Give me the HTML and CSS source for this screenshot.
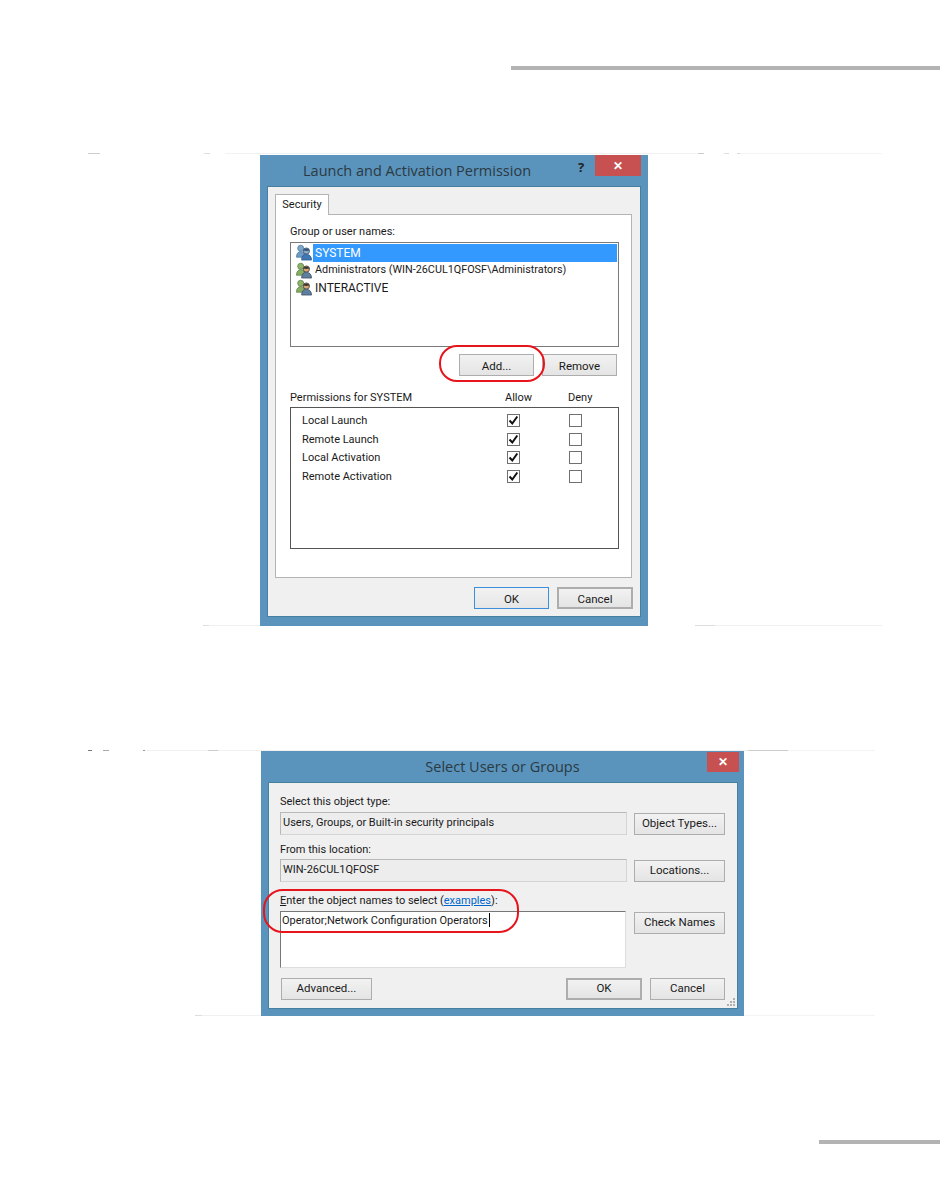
FILE: index.html
```html
<!DOCTYPE html>
<html lang="en">
<head>
    <meta charset="UTF-8">
    <meta name="viewport" content="width=device-width, initial-scale=1.0">
    <title>Launch and Activation Permission</title>
    <link rel="stylesheet" href="styles.css">
</head>
<body>
<svg class="defs" width="0" height="0">
    <symbol id="users" viewBox="0 0 18 18">
        <circle cx="5.500" cy="4.500" r="3.200" fill="#8fb36a" stroke="#5d7f48" stroke-width=".8"/>
        <path d="M1 14c0-4 2-6 4.500-6S10 10 10 14z" fill="#86ad62" stroke="#5d7f48" stroke-width=".8"/>
        <circle cx="11.500" cy="7.500" r="3.300" fill="#d8a878" stroke="#4d4a45" stroke-width="1"/>
        <path d="M8.200 7c.5-3 6-3.200 6.600 0-2 .6-4.600.6-6.600 0z" fill="#3d3a36"/>
        <path d="M6.500 17c0-4 2-6.200 5-6.200s5.500 2.200 5.500 6.200z" fill="#5f7f9e" stroke="#3c4f63" stroke-width=".8"/>
    </symbol>
    <symbol id="users-sel" viewBox="0 0 18 18">
        <circle cx="5.500" cy="4.500" r="3.200" fill="#7fa6c8" stroke="#4c7aa3" stroke-width=".8"/>
        <path d="M1 14c0-4 2-6 4.500-6S10 10 10 14z" fill="#6d9bc4" stroke="#4c7aa3" stroke-width=".8"/>
        <circle cx="11.500" cy="7.500" r="3.300" fill="#8fa9c4" stroke="#3f5f82" stroke-width="1"/>
        <path d="M8.200 7c.5-3 6-3.200 6.600 0-2 .6-4.600.6-6.600 0z" fill="#35557a"/>
        <path d="M6.500 17c0-4 2-6.200 5-6.200s5.500 2.200 5.500 6.200z" fill="#3f78b5" stroke="#2f5784" stroke-width=".8"/>
    </symbol>
    <symbol id="check" viewBox="0 0 13 13">
        <path d="M2.500 6.500l2.800 3 5-7" fill="none" stroke="#111" stroke-width="2"/>
    </symbol>
</svg>

<div class="page">
    <div class="top-rule"></div>

    <div class="scan-line scan-a"></div>

    <section class="dialog perm-dialog">
        <div class="titlebar">
            <div class="title perm-title">Launch and Activation Permission</div>
            <div class="help">?</div>
            <div class="close perm-close">&#10005;</div>
        </div>
        <div class="client perm-client">
            <div class="tab">Security</div>
            <div class="tab-panel">
                <div class="label names-label">Group or user names:</div>
                <div class="listbox">
                    <div class="user-row">
                        <svg class="user-icon"><use href="#users-sel"/></svg>
                        <span class="user-name selected">SYSTEM</span>
                    </div>
                    <div class="user-row">
                        <svg class="user-icon"><use href="#users"/></svg>
                        <span class="user-name small">Administrators (WIN-26CUL1QFOSF\Administrators)</span>
                    </div>
                    <div class="user-row">
                        <svg class="user-icon"><use href="#users"/></svg>
                        <span class="user-name">INTERACTIVE</span>
                    </div>
                </div>
                <div class="list-actions">
                    <button class="btn btn-add">Add...</button>
                    <button class="btn btn-remove">Remove</button>
                </div>
                <div class="perm-head">
                    <span>Permissions for SYSTEM</span>
                    <span>Allow</span>
                    <span>Deny</span>
                </div>
                <div class="perm-box">
                    <div class="perm-row">
                        <span>Local Launch</span>
                        <span class="check"><svg><use href="#check"/></svg></span>
                        <span class="check"></span>
                    </div>
                    <div class="perm-row">
                        <span>Remote Launch</span>
                        <span class="check"><svg><use href="#check"/></svg></span>
                        <span class="check"></span>
                    </div>
                    <div class="perm-row">
                        <span>Local Activation</span>
                        <span class="check"><svg><use href="#check"/></svg></span>
                        <span class="check"></span>
                    </div>
                    <div class="perm-row">
                        <span>Remote Activation</span>
                        <span class="check"><svg><use href="#check"/></svg></span>
                        <span class="check"></span>
                    </div>
                </div>
            </div>
            <div class="perm-footer">
                <button class="btn btn-default">OK</button>
                <button class="btn btn-cancel">Cancel</button>
            </div>
        </div>
        <div class="callout callout-add"></div>
    </section>

    <div class="scan-line scan-b"></div>
    <div class="scan-line scan-c"></div>

    <section class="dialog select-dialog">
        <div class="titlebar">
            <div class="title">Select Users or Groups</div>
            <div class="close select-close">&#10005;</div>
        </div>
        <div class="client select-client">
            <div class="label type-label">Select this object type:</div>
            <div class="field-row">
                <div class="field">Users, Groups, or Built-in security principals</div>
                <button class="btn btn-side">Object Types...</button>
            </div>
            <div class="label from-label">From this location:</div>
            <div class="field-row">
                <div class="field">WIN-26CUL1QFOSF</div>
                <button class="btn btn-side">Locations...</button>
            </div>
            <div class="label enter-label"><u>E</u>nter the object names to select (<a href="#">examples</a>):</div>
            <div class="field-row names-row">
                <div class="names-input">Operator;Network Configuration Operators<span class="caret"></span></div>
                <button class="btn btn-side">Check Names</button>
            </div>
            <div class="select-footer">
                <button class="btn btn-advanced">Advanced...</button>
                <div class="footer-right">
                    <button class="btn btn-default-gray">OK</button>
                    <button class="btn btn-side-cancel">Cancel</button>
                </div>
            </div>
            <svg class="grip" viewBox="0 0 8 8">
                <path d="M6 0h2v2H6zM3 3h2v2H3zM6 3h2v2H6zM0 6h2v2H0zM3 6h2v2H3zM6 6h2v2H6z" fill="#b0b0b0"/>
            </svg>
        </div>
        <div class="callout callout-names"></div>
    </section>

    <div class="scan-line scan-d"></div>

    <div class="bottom-rule"></div>
</div>
</body>
</html>
```

FILE: styles.css
```css
* {
    box-sizing: border-box;
}

html, body {
    margin: 0;
    background: #fff;
}

.defs {
    position: absolute;
}

.page {
    width: 950px;
    height: 1181px;
    overflow: hidden;
    position: relative;
    padding-top: 66px;
    font-family: Roboto, "Noto Sans", sans-serif;
    font-size: 11px;
    color: #1a1a1a;
}

.top-rule {
    width: 429px;
    height: 4px;
    margin-left: 511px;
    background: #b3b3b3;
}

.bottom-rule {
    width: 121px;
    height: 4px;
    margin: 124px 0 0 819px;
    background: #b3b3b3;
}

/* faint leftovers of the scanned page around the dialogs */
.scan-line {
    height: 1px;
    width: 794px;
    margin-left: 88px;
}

.scan-a {
    margin-top: 83px;
    background: linear-gradient(to right,
        #ccc 0 12px, #fff 12px 116px, #ddd 116px 122px, #fff 122px 137px, #f2f2f2 137px 610px,
        #ccc 610px 616px, #fff 616px 636px, #ddd 636px 641px, #fff 641px 649px, #ddd 649px 652px, #f4f4f4 652px 794px);
}

.scan-b {
    margin-top: -1px;
    background: linear-gradient(to right,
        #fff 0 115px, #ddd 115px 121px, #f0f0f0 121px 172px, #fff 172px 607px, #ddd 607px 627px, #f0f0f0 627px 794px);
}

.scan-c {
    margin-top: 124px;
    width: 787px;
    background: linear-gradient(to right,
        #777 0 4px, #fff 4px 15px, #aaa 15px 21px, #fff 21px 55px, #999 55px 57px, #f0f0f0 57px 120px,
        #ccc 120px 130px, #f0f0f0 130px 660px, #ccc 660px 700px, #f4f4f4 700px 787px);
}

.scan-d {
    margin-top: -1px;
    width: 787px;
    background: linear-gradient(to right,
        #fff 0 107px, #ddd 107px 114px, #f0f0f0 114px 200px, #fff 200px 522px, #ddd 522px 590px, #f4f4f4 590px 787px);
}

.dialog {
    position: relative;
    background: #5a93bc;
}

.perm-dialog {
    width: 388px;
    height: 471px;
    margin: 1px 0 0 260px;
}

.select-dialog {
    width: 483px;
    height: 265px;
    margin: 0 0 0 261px;
}

.titlebar {
    display: flex;
    position: relative;
    height: 31px;
    justify-content: center;
    align-items: center;
}

.perm-dialog .titlebar {
    justify-content: flex-start;
}

.title {
    font-family: "Open Sans", sans-serif;
    font-size: 14.500px;
    color: #2b3a42;
}

.perm-title {
    margin-left: 43px;
}

.help {
    position: absolute;
    left: 318px;
    top: 3px;
    font-family: "Open Sans", sans-serif;
    font-size: 13px;
    font-weight: 700;
    color: #222;
}

.close {
    position: absolute;
    top: 0;
    background: #c75050;
    color: #fff;
    font-size: 12px;
    font-weight: 700;
    display: flex;
    align-items: center;
    justify-content: center;
}

.perm-close {
    left: 335px;
    width: 46px;
    height: 21px;
}

.select-close {
    left: 446px;
    top: 1px;
    width: 32px;
    height: 20px;
}

.client {
    background: #f0f0f0;
    border: 1px solid #47809f;
    position: relative;
}

.perm-client {
    width: 374px;
    height: 431px;
    margin-left: 7px;
    padding: 7px 7px 0 7px;
}

.select-client {
    width: 470px;
    height: 227px;
    margin-left: 7px;
    padding: 11px 12px 0 11px;
}

.select-client .btn {
    padding: 0 0 2px;
}

.tab {
    width: 54px;
    height: 21px;
    margin-bottom: -1px;
    background: #fff;
    border: 1px solid #b4b4b4;
    border-bottom: 0;
    position: relative;
    text-align: center;
    line-height: 19px;
}

.tab-panel {
    width: 357px;
    height: 364px;
    background: #fff;
    border: 1px solid #b4b4b4;
    padding: 9px 14px 0 14px;
}

.label {
    line-height: 16px;
    height: 16px;
}

.names-label {
    height: 18px;
}

.type-label {
    height: 18px;
}

.listbox {
    width: 329px;
    height: 105px;
    border: 1px solid #7a7a7a;
    padding: 1px;
}

.user-row {
    display: flex;
    align-items: center;
    height: 17.500px;
}

.user-icon {
    width: 18px;
    height: 17px;
    margin-left: 3px;
}

.user-name {
    font-size: 12px;
    line-height: 18px;
    padding-left: 2px;
}

.user-name.small {
    font-size: 10.800px;
}

.selected {
    flex: 1;
    background: #3399ff;
    color: #fff;
}

.list-actions {
    display: flex;
    justify-content: flex-end;
    gap: 8px;
    width: 327px;
    margin-top: 7px;
}

.btn {
    height: 22px;
    padding: 1px 0 0;
    font-family: inherit;
    font-size: 11.500px;
    color: #1a1a1a;
    background: linear-gradient(#f2f2f2, #e4e4e4);
    border: 1px solid #adadad;
    border-radius: 0;
}

.btn-add {
    width: 75px;
}

.btn-remove {
    width: 75px;
}

.perm-head {
    display: grid;
    grid-template-columns: 215px 63px auto;
    margin-top: 14px;
    height: 17px;
    line-height: 16px;
}

.perm-box {
    width: 329px;
    height: 142px;
    border: 1px solid #555;
    padding: 3.300px 0 0 11px;
}

.perm-row {
    display: grid;
    grid-template-columns: 205px 62px 14px;
    align-items: center;
    height: 18.500px;
}

.check {
    display: block;
    width: 13px;
    height: 13px;
    background: #fff;
    border: 1px solid #707070;
    position: relative;
}

.check svg {
    position: absolute;
    left: -1px;
    top: -1px;
    width: 13px;
    height: 13px;
}

.perm-footer {
    display: flex;
    gap: 8px;
    margin: 9px 0 0 199px;
}

.btn-default {
    width: 75px;
    flex: none;
    border-color: #3c8fd8;
    background: linear-gradient(#f2f2f2, #e6e6e6);
}

.btn-cancel {
    width: 76px;
    flex: none;
    border: 2px solid #adadad;
}

.field-row {
    display: flex;
    justify-content: space-between;
    align-items: flex-end;
    height: 23px;
}

.field {
    width: 347px;
    height: 23px;
    line-height: 19px;
    padding-left: 2px;
    background: #ededed;
    border: 1px solid #b8b8b8;
    border-right-color: #d4d4d4;
    border-bottom-color: #d4d4d4;
}

.btn-side {
    width: 91px;
    flex: none;
}

.from-label {
    margin-top: 7px;
    height: 17px;
}

.enter-label {
    margin-top: 11px;
    height: 18px;
}

.enter-label a {
    color: #0066cc;
}

.names-row {
    height: 57px;
    align-items: flex-start;
}

.names-input {
    width: 346px;
    height: 57px;
    background: #fff;
    border: 1px solid #777;
    border-right-color: #ddd;
    border-bottom-color: #ddd;
    padding-left: 1px;
    line-height: 18px;
}

.names-row .btn-side {
    margin-top: 1px;
}

.caret {
    display: inline-block;
    width: 1px;
    height: 14px;
    margin-left: 1px;
    background: #000;
    vertical-align: -3px;
}

.select-footer {
    display: flex;
    justify-content: space-between;
    margin-top: 10px;
    padding-left: 1px;
}

.footer-right {
    display: flex;
    gap: 8px;
}

.btn-advanced {
    width: 91px;
}

.btn-default-gray {
    width: 76px;
    border: 2px solid #adadad;
}

.btn-side-cancel {
    width: 75px;
}

.grip {
    position: absolute;
    right: 2px;
    bottom: 2px;
    width: 8px;
    height: 8px;
}

.callout {
    position: absolute;
    border: 2px solid #e8141c;
    pointer-events: none;
}

.callout-add {
    left: 179px;
    top: 190px;
    width: 106px;
    height: 37px;
    border-radius: 18px;
}

.callout-names {
    left: 2px;
    top: 138px;
    width: 256px;
    height: 44px;
    border-radius: 20px;
}
```
